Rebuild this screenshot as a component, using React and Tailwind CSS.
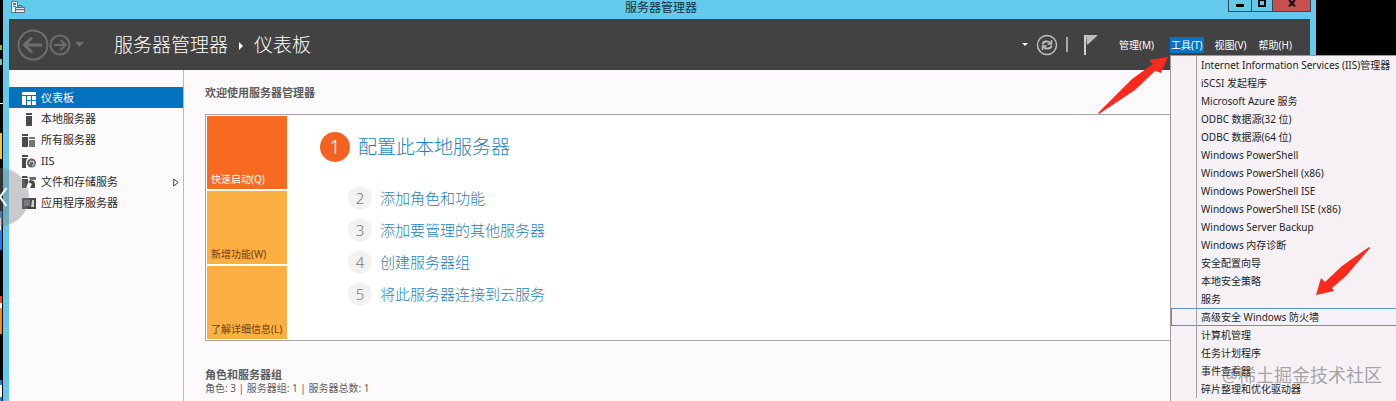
import { useState } from 'react';

const NAV_ITEMS = [
    { id: 'dashboard', label: '仪表板', icon: DashboardIcon },
    { id: 'local', label: '本地服务器', icon: ServerIcon },
    { id: 'all', label: '所有服务器', icon: ServersIcon },
    { id: 'iis', label: 'IIS', icon: IisIcon },
    { id: 'storage', label: '文件和存储服务', icon: StorageIcon, expandable: true },
    { id: 'app', label: '应用程序服务器', icon: AppServerIcon },
];

const TOOLS = [
    'Internet Information Services (IIS)管理器',
    'iSCSI 发起程序',
    'Microsoft Azure 服务',
    'ODBC 数据源(32 位)',
    'ODBC 数据源(64 位)',
    'Windows PowerShell',
    'Windows PowerShell (x86)',
    'Windows PowerShell ISE',
    'Windows PowerShell ISE (x86)',
    'Windows Server Backup',
    'Windows 内存诊断',
    '安全配置向导',
    '本地安全策略',
    '服务',
    '高级安全 Windows 防火墙',
    '计算机管理',
    '任务计划程序',
    '事件查看器',
    '碎片整理和优化驱动器',
];

const STEPS = [
    '添加角色和功能',
    '添加要管理的其他服务器',
    '创建服务器组',
    '将此服务器连接到云服务',
];

function DashboardIcon() {
    return (
        <svg width="14" height="13" viewBox="0 0 14 13" fill="currentColor">
            <path d="M0 0h14v3H0zM0 4h4v9H0zM5 4h4v4H5zM10 4h4v4h-4zM5 9h4v4H5zM10 9h4v4h-4z" />
        </svg>
    );
}

function ServerIcon() {
    return (
        <svg width="14" height="13" viewBox="0 0 14 13" fill="currentColor">
            <path d="M4 0h6v2H4zM4 3h6v10H4z" />
        </svg>
    );
}

function ServersIcon() {
    return (
        <svg width="14" height="13" viewBox="0 0 14 13" fill="currentColor">
            <path d="M0 0h6v2H0zM0 3h6v10H0z" />
            <path d="M7 3h6v2H7zM7 6h6v7H7z" opacity=".75" />
        </svg>
    );
}

function IisIcon() {
    return (
        <svg width="14" height="13" viewBox="0 0 14 13" fill="currentColor">
            <path d="M0 0h6v2H0zM0 3h5.500L4 6v7H0z" />
            <circle cx="9.500" cy="8" r="4.500" opacity=".85" />
            <path d="M7 9l1.500-3 3 .5.5 3-2 1.500" fill="none" stroke="#fcfafd" strokeWidth=".8" />
        </svg>
    );
}

function StorageIcon() {
    return (
        <svg width="14" height="13" viewBox="0 0 14 13" fill="currentColor">
            <path d="M0 0h5l1 2H0zM0 3h6v4l-2 5H0z" />
            <path d="M7 1h7v3H8z" opacity=".8" />
            <path d="M6 6l2-2 4 1 1 3v4H8l2-4z" />
        </svg>
    );
}

function AppServerIcon() {
    return (
        <svg width="14" height="13" viewBox="0 0 14 13">
            <path d="M0 1h14v11H0z" fill="currentColor" />
            <path d="M2 3h6v6H2z" fill="#777" />
            <path d="M10 3h2v7h-3z" fill="#cfcfcf" />
        </svg>
    );
}

function TitleBar() {
    return (
        <div className="flex h-[19px] items-start pr-[5px]">
            <div className="flex-1 pl-2">
                <svg width="14" height="14" viewBox="0 0 14 14">
                    <path d="M.5 1.500h6v11h-6z" fill="#eef6fa" stroke="#3d7ea6" />
                    <path d="M2 3h3v2H2zM2 6h3v1H2z" fill="#2f78b5" />
                    <path d="M4.500 7.500h9v5h-9z" fill="#e3e7e8" stroke="#5e6c73" />
                    <path d="M7 7V5.500h4V7M5 9.500h8" fill="none" stroke="#5e6c73" />
                </svg>
            </div>
            <h1 className="text-xs leading-4 text-[#12303c]">服务器管理器</h1>
            <div className="flex flex-1 justify-end">
                <div className="flex h-3 border-x border-b border-[#2c4a58]">
                    <button aria-label="最小化" className="flex w-[23px] items-center justify-center border-r border-[#2c4a58]">
                        <span className="h-[3px] w-2 bg-black" />
                    </button>
                    <button aria-label="最大化" className="flex w-[21px] justify-center border-r border-[#2c4a58]">
                        <span className="h-[7px] w-2 border-2 border-t border-black" />
                    </button>
                    <button aria-label="关闭" className="flex w-[37px] justify-center bg-[#c8504f]">
                        <svg width="8" height="7" viewBox="0 0 8 7" stroke="#111" strokeWidth="2">
                            <path d="M1 0l6 6.500M7 0L1 6.500" />
                        </svg>
                    </button>
                </div>
            </div>
        </div>
    );
}

function ToolsMenu() {
    return (
        <ul className="absolute left-0 top-full z-20 mt-0.5 w-[232px] border border-[#9a9a9a] bg-[#f5f1f5] pb-2 text-[10px] text-[#1e1e1e]">
            {TOOLS.map((tool, i) => (
                <li key={tool} className="flex h-[18px]">
                    <button
                        className={`flex w-full items-stretch border text-left ${i === 14 ? 'border-[#5b93cf]' : 'border-transparent'}`}
                    >
                        <span className="-my-px w-[25px] shrink-0 border-r border-[#a3a3a3]" />
                        <span className="whitespace-nowrap pl-1 leading-4">{tool}</span>
                    </button>
                </li>
            ))}
        </ul>
    );
}

function Header() {
    const [toolsOpen, setToolsOpen] = useState(true);

    return (
        <header className="flex h-[51px] items-center justify-between bg-[#424242] pl-2 pr-[17px] text-white">
            <div className="flex items-center">
                <button aria-label="后退">
                    <svg width="32" height="32" viewBox="0 0 32 32" fill="none" stroke="#6e6e6e">
                        <circle cx="16" cy="16" r="14.500" strokeWidth="2" />
                        <path d="M8 16h17M15 8.500L7.500 16l7.500 7.500" strokeWidth="3" />
                    </svg>
                </button>
                <button aria-label="前进">
                    <svg width="22" height="22" viewBox="0 0 22 22" fill="none" stroke="#6e6e6e">
                        <circle cx="11" cy="11" r="9.500" strokeWidth="2" />
                        <path d="M5 11h11M11.500 6l5 5-5 5" strokeWidth="2" />
                    </svg>
                </button>
                <svg className="ml-1" width="9" height="5" viewBox="0 0 9 5" fill="#6e6e6e">
                    <path d="M0 0h9L4.500 5z" />
                </svg>
                <div className="ml-[30px] flex items-center gap-2.5 pt-0.5 text-[19px] font-light">
                    <span>服务器管理器</span>
                    <svg width="6" height="8" viewBox="0 0 6 8" fill="white">
                        <path d="M1 0l4 4-4 4z" />
                    </svg>
                    <span>仪表板</span>
                </div>
            </div>

            <div className="flex items-center text-[10px]">
                <svg width="6" height="3" viewBox="0 0 6 3" fill="white">
                    <path d="M0 0h6L3 3z" />
                </svg>
                <button aria-label="刷新" className="ml-2">
                    <svg width="22" height="22" viewBox="0 0 22 22" fill="none" stroke="#bdbdbd">
                        <circle cx="11" cy="11" r="9.500" strokeWidth="1.500" />
                        <path d="M6.500 10.500c.5-3 5-4.500 8-1.500M15.500 11.500c-.5 3-5 4.500-8 1.500" strokeWidth="1.800" />
                        <path d="M15.500 6v4h-4M6.500 16v-4h4" strokeWidth="1.500" />
                    </svg>
                </button>
                <span className="ml-2 h-[15px] w-0.5 bg-[#a8a8a8]" />
                <button aria-label="通知" className="ml-4">
                    <svg width="14" height="20" viewBox="0 0 14 20">
                        <path d="M0 0h2v20H0z" fill="#cfcfcf" />
                        <path d="M2 0h12L4 9.500H3z" fill="#bdbdbd" />
                    </svg>
                </button>
                <nav className="ml-5 flex items-center">
                    <button className="px-px leading-4">管理(M)</button>
                    <div className="relative ml-[15px]">
                        <button
                            className={`block px-px leading-4 ${toolsOpen ? 'bg-[#0b71c1]' : ''}`}
                            onClick={() => setToolsOpen(!toolsOpen)}
                        >
                            工具(T)
                        </button>
                        {toolsOpen && <ToolsMenu />}
                    </div>
                    <button className="ml-2.5 px-px leading-4">视图(V)</button>
                    <button className="ml-2.5 px-px leading-4">帮助(H)</button>
                </nav>
            </div>
        </header>
    );
}

function Sidebar() {
    const [active, setActive] = useState('dashboard');

    return (
        <aside className="w-[175px] shrink-0 border-r border-[#b9b9bd] pt-[17px]">
            {NAV_ITEMS.map(({ id, label, icon: Icon, expandable }) => (
                <button
                    key={id}
                    onClick={() => setActive(id)}
                    className={`flex h-[21px] w-full items-center pl-[13px] pr-1 pt-px text-[11px] ${
                        active === id ? 'bg-[#0473bf] text-white' : 'text-[#4a4a4a]'
                    }`}
                >
                    <Icon />
                    <span className={`ml-[5px] ${active === id ? '' : 'text-[#2a2a2a]'}`}>{label}</span>
                    {expandable && (
                        <svg className="ml-auto" width="6" height="9" viewBox="0 0 6 9" fill="white" stroke="#444">
                            <path d="M.7 1l4.500 3.500L.7 8z" />
                        </svg>
                    )}
                </button>
            ))}
        </aside>
    );
}

function WelcomeTile() {
    return (
        <section className="mt-[14px] flex border border-[#a5a5a5] bg-white p-px">
            <div className="flex w-20 shrink-0 flex-col gap-0.5 text-[10px]">
                <button className="flex h-[73px] items-end bg-[#f86a20] px-1 pb-0.5 text-white">快速启动(Q)</button>
                <button className="flex h-[73px] items-end bg-[#fdb042] px-1 pb-0.5 text-[#6e3d0c]">新增功能(W)</button>
                <button className="flex h-[73px] items-end bg-[#fdb042] px-1 pb-0.5 text-[#6e3d0c]">了解详细信息(L)</button>
            </div>
            <div className="ml-[33px] pt-4 font-light">
                <div className="flex items-center gap-2">
                    <span className="flex size-[30px] items-center justify-center rounded-full bg-[#f26322] text-xl text-white">1</span>
                    <a href="#configure" className="text-[19px] leading-[30px] text-[#1c7fc0]">配置此本地服务器</a>
                </div>
                <ol className="ml-7 mt-6 flex flex-col gap-2">
                    {STEPS.map((step, i) => (
                        <li key={step} className="flex h-6 items-center gap-2">
                            <span className="flex size-6 items-center justify-center rounded-full bg-[#f3f2f3] text-[15px] text-[#777]">
                                {i + 2}
                            </span>
                            <a href="#step" className="text-[15px] text-[#1c7fc0]">{step}</a>
                        </li>
                    ))}
                </ol>
            </div>
        </section>
    );
}

// slice of the host desktop that shows beside the window
function DesktopEdge() {
    return (
        <svg className="w-[3px] shrink-0" width="3" height="401" viewBox="0 0 3 401">
            <path d="M0 45h2v5H0z" fill="#7bbf5a" />
            <path d="M0 59h2v6H0z" fill="#5fc7b8" />
            <path d="M0 103h3v1H0z" fill="#fff" />
            <path d="M0 133h2v26H0z" fill="#f2c230" />
            <path d="M0 211h2v39H0z" fill="#1d7bf0" />
            <path d="M0 218h1v12H0z" fill="#fff" />
            <path d="M0 296h2v38H0z" fill="#f28a1c" />
            <path d="M0 296h2v7H0z" fill="#e8481c" />
            <path d="M0 303h2v5H0z" fill="#fff" />
            <path d="M0 380h2v21H0z" fill="#1b83d8" />
            <path d="M0 385h2v12H0z" fill="#fff" />
        </svg>
    );
}

export default function App() {
    return (
        <div className="relative flex h-screen overflow-hidden bg-black font-['Noto_Sans','Noto_Sans_CJK_SC',sans-serif]">
            <DesktopEdge />
            <div className="mr-20 flex min-w-0 flex-1 flex-col bg-[#63caec]">
                <TitleBar />
                <div className="ml-1.5 mr-1.5 flex flex-1 flex-col">
                    <Header />
                    <div className="flex flex-1 bg-[#fcfafd]">
                        <Sidebar />
                        <main className="min-w-0 flex-1 pl-[21px] pt-[15px]">
                            <h2 className="text-[11px] font-bold leading-[15px] text-[#5c5c5c]">欢迎使用服务器管理器</h2>
                            <WelcomeTile />
                            <h2 className="mt-[26px] text-[11px] font-bold leading-[15px] text-[#5c5c5c]">角色和服务器组</h2>
                            <p className="text-[10px] leading-3 text-[#5c5c5c]">角色: 3 | 服务器组: 1 | 服务器总数: 1</p>
                        </main>
                    </div>
                </div>
            </div>

            <button aria-label="上一张" className="absolute -left-[29px] top-[168px] flex size-[58px] items-center justify-end rounded-full bg-[#808080]/40 pr-[22px]">
                <svg width="8" height="20" viewBox="0 0 8 20" fill="none" stroke="white" strokeWidth="2">
                    <path d="M7.500 1L1 10l6.500 9" />
                </svg>
            </button>

            {/* callout arrows */}
            <svg className="absolute right-[228px] top-14 z-30" width="70" height="58" viewBox="0 0 70 58" fill="#fb2a1c">
                <path d="M70 1L51 4l4 4L34 23 0 57l1 1 36-24 20-19 6 2z" />
            </svg>
            <svg className="absolute right-[26px] top-[246px] z-30" width="54" height="50" viewBox="0 0 54 50" fill="#fb2a1c">
                <path d="M0 49l5-17 4 4L26 20 53 1l1 1-24 28-14 12 2 3z" />
            </svg>

            <p className="absolute bottom-3.5 right-3.5 z-30 text-lg leading-6 text-[#6b6b6b]/60">@稀土掘金技术社区</p>
        </div>
    );
}
